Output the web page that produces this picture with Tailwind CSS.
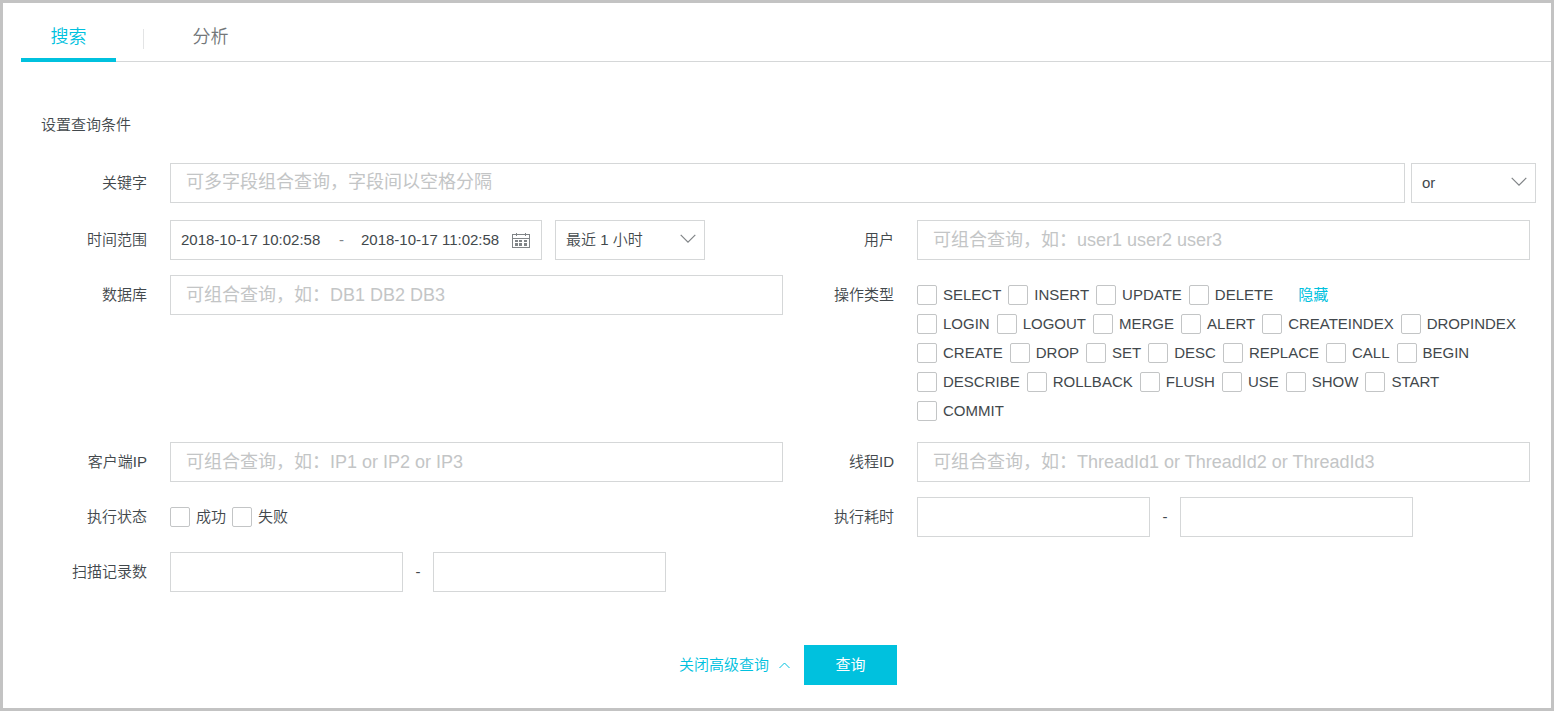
<!DOCTYPE html>
<html lang="zh-CN">
<head>
<meta charset="utf-8">
<title>搜索</title>
<script src="https://cdn.jsdelivr.net/npm/@tailwindcss/browser@4"></script>
</head>
<body class="flex min-h-screen flex-col border-3 border-[#c3c3c3] bg-white font-['Liberation_Sans','Noto_Sans_CJK_SC',sans-serif] text-[15px] leading-5 font-[350] text-[#42484c]">
<nav class="ml-[18px] flex h-[59px] items-stretch border-b border-[#d5d7d8] text-lg">
  <a href="#search" class="-mb-px w-[95px] border-b-4 border-[#00c1de] pt-5 text-center text-[#00c1de]">搜索</a>
  <span class="mt-[26px] ml-[27px] h-5 w-px bg-[#e3e4e5]"></span>
  <a href="#analysis" class="ml-[19px] w-[95px] pt-5 text-center text-[#73777a]">分析</a>
</nav>
<form class="pt-[53px] pr-[15px] pl-[33px]" onsubmit="return false">
  <h2 class="pl-[5px]">设置查询条件</h2>

  <div class="mt-7 flex h-10 items-center">
    <label for="kw" class="w-[134px] shrink-0 pr-[23px] text-right">关键字</label>
    <input id="kw" type="text" placeholder="可多字段组合查询，字段间以空格分隔" class="h-10 min-w-0 flex-1 border border-[#d5d7d8] px-[15px] pb-[2px] text-lg font-normal placeholder:text-[#c3c5c6]">
    <div class="relative ml-[6px] w-[125px]">
      <select aria-label="关键字关系" class="h-10 w-full appearance-none border border-[#d5d7d8] bg-white px-[10px]"><option>or</option><option>and</option></select>
      <svg class="pointer-events-none absolute top-[14px] right-[9px] h-[10px] w-4" viewBox="0 0 16 10" fill="none" stroke="#808487" stroke-width="1.2"><path d="M.7 .8 8 8.200 15.300 .8"/></svg>
    </div>
  </div>

  <div class="mt-[17px] mr-[6px] grid grid-cols-2 gap-y-[15px]">
    <div class="flex h-10 items-center">
      <label for="from" class="w-[134px] shrink-0 pr-[23px] text-right">时间范围</label>
      <div class="flex h-10 w-[372px] items-center border border-[#d5d7d8] pl-[10px]">
        <input id="from" type="text" value="2018-10-17 10:02:58" class="w-[150px]">
        <span class="w-[30px] pl-2 text-[#808487]">-</span>
        <input aria-label="结束时间" type="text" value="2018-10-17 11:02:58" class="w-[151px]">
        <svg class="h-[18px] w-[18px]" viewBox="0 0 18 18" fill="none" stroke="#808487" shape-rendering="crispEdges"><path d="M.5 3.500h17v13H.5zM.5 7.500h17M4.500 2v3M13.500 2v3"/><path stroke="none" fill="#808487" d="M3 9h3v2H3zM7 9h3v2H7zM12 9h3v2h-3zM3 12h3v3H3zM7 12h3v3H7zM12 12h3v3h-3z"/></svg>
      </div>
      <div class="relative ml-[13px] w-[150px]">
        <select aria-label="时间快捷选择" class="h-10 w-full appearance-none border border-[#d5d7d8] bg-white px-[10px]"><option>最近 1 小时</option></select>
        <svg class="pointer-events-none absolute top-[14px] right-[9px] h-[10px] w-4" viewBox="0 0 16 10" fill="none" stroke="#808487" stroke-width="1.2"><path d="M.7 .8 8 8.200 15.300 .8"/></svg>
      </div>
    </div>
    <div class="flex h-10 items-center">
      <label for="user" class="w-[134px] shrink-0 pr-[23px] text-right">用户</label>
      <input id="user" type="text" placeholder="可组合查询，如：user1 user2 user3" class="h-10 min-w-0 flex-1 border border-[#d5d7d8] px-[15px] text-lg font-normal placeholder:text-[#c3c5c6]">
    </div>

    <div class="flex h-10 items-center">
      <label for="db" class="w-[134px] shrink-0 pr-[23px] text-right">数据库</label>
      <input id="db" type="text" placeholder="可组合查询，如：DB1 DB2 DB3" class="h-10 min-w-0 flex-1 border border-[#d5d7d8] px-[15px] text-lg font-normal placeholder:text-[#c3c5c6]">
    </div>
    <div role="group" aria-labelledby="ops" class="mb-[6px] flex pt-[10px]">
      <span id="ops" class="w-[134px] shrink-0 pr-[23px] text-right">操作类型</span>
      <div id="oplist" class="flex flex-col gap-[9px]"></div>
    </div>

    <div class="flex h-10 items-center">
      <label for="ip" class="w-[134px] shrink-0 pr-[23px] text-right">客户端IP</label>
      <input id="ip" type="text" placeholder="可组合查询，如：IP1 or IP2 or IP3" class="h-10 min-w-0 flex-1 border border-[#d5d7d8] px-[15px] text-lg font-normal placeholder:text-[#c3c5c6]">
    </div>
    <div class="flex h-10 items-center">
      <label for="tid" class="w-[134px] shrink-0 pr-[23px] text-right">线程ID</label>
      <input id="tid" type="text" placeholder="可组合查询，如：ThreadId1 or ThreadId2 or ThreadId3" class="h-10 min-w-0 flex-1 border border-[#d5d7d8] px-[15px] text-lg font-normal placeholder:text-[#c3c5c6]">
    </div>

    <div role="group" aria-labelledby="st" class="flex h-10 items-center">
      <span id="st" class="w-[134px] shrink-0 pr-[23px] text-right">执行状态</span>
      <div class="flex gap-[6px]">
        <label class="flex gap-[6px]"><input type="checkbox" class="size-5 appearance-none rounded-xs border border-[#c3c5c6] checked:bg-[#00c1de]">成功</label>
        <label class="flex gap-[6px]"><input type="checkbox" class="size-5 appearance-none rounded-xs border border-[#c3c5c6] checked:bg-[#00c1de]">失败</label>
      </div>
    </div>
    <div class="flex h-10 items-center">
      <label for="t1" class="w-[134px] shrink-0 pr-[23px] text-right">执行耗时</label>
      <input id="t1" type="text" class="h-10 w-[233px] border border-[#d5d7d8] px-[15px]">
      <span class="w-[30px] text-center">-</span>
      <input aria-label="执行耗时上限" type="text" class="h-10 w-[233px] border border-[#d5d7d8] px-[15px]">
    </div>

    <div class="flex h-10 items-center">
      <label for="s1" class="w-[134px] shrink-0 pr-[23px] text-right">扫描记录数</label>
      <input id="s1" type="text" class="h-10 w-[233px] border border-[#d5d7d8] px-[15px]">
      <span class="w-[30px] text-center">-</span>
      <input aria-label="扫描记录数上限" type="text" class="h-10 w-[233px] border border-[#d5d7d8] px-[15px]">
    </div>
  </div>

  <div class="mt-[53px] flex items-center justify-center pl-1">
    <a href="#simple" class="flex items-center gap-[10px] text-[#00c1de]">关闭高级查询
      <svg class="h-[7px] w-[11px]" viewBox="0 0 11 7" fill="none" stroke="#00c1de"><path d="M.5 6 5.500 1 10.500 6"/></svg>
    </a>
    <button type="submit" class="ml-[14px] h-10 w-[93px] bg-[#00c1de] font-normal text-white">查询</button>
  </div>
</form>
<script>
const rows = [
  ['SELECT', 'INSERT', 'UPDATE', 'DELETE'],
  ['LOGIN', 'LOGOUT', 'MERGE', 'ALERT', 'CREATEINDEX', 'DROPINDEX'],
  ['CREATE', 'DROP', 'SET', 'DESC', 'REPLACE', 'CALL', 'BEGIN'],
  ['DESCRIBE', 'ROLLBACK', 'FLUSH', 'USE', 'SHOW', 'START'],
  ['COMMIT'],
];
document.getElementById('oplist').innerHTML = rows.map((row, i) =>
  '<div class="flex gap-[7px]">' + row.map(op =>
    `<label class="flex gap-[6px]"><input type="checkbox" name="op" value="${op}" class="size-5 appearance-none rounded-xs border border-[#c3c5c6] checked:bg-[#00c1de]">${op}</label>`
  ).join('') + (i === 0 ? '<a href="#hide" class="ml-[18px] font-normal text-[#00c1de]">隐藏</a>' : '') + '</div>').join('');
</script>
</body>
</html>
